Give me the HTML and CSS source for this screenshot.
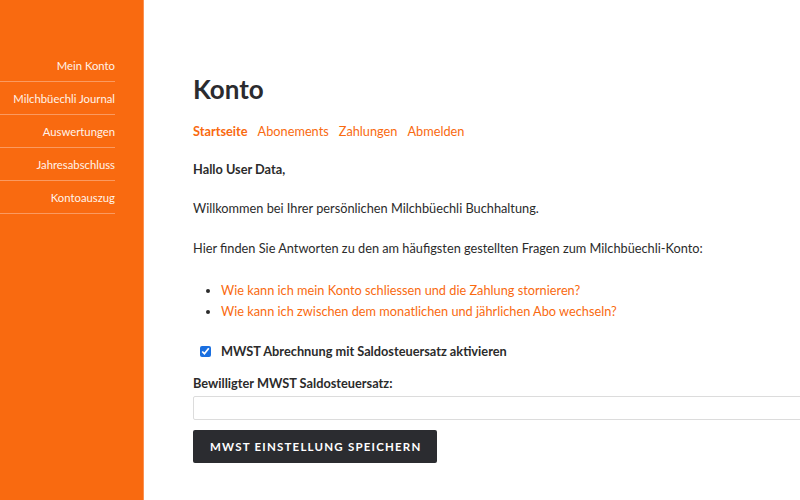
FILE: index.html
```html
<!DOCTYPE html>
<html lang="de">
<head>
    <meta charset="UTF-8">
    <title>Konto</title>
    <link rel="stylesheet" href="styles.css">
</head>
<body>
    <div class="layout">
        <aside class="sidebar">
            <ul class="side-menu">
                <li><a href="#">Mein Konto</a></li>
                <li><a href="#">Milchbüechli Journal</a></li>
                <li><a href="#">Auswertungen</a></li>
                <li><a href="#">Jahresabschluss</a></li>
                <li><a href="#">Kontoauszug</a></li>
            </ul>
        </aside>

        <main class="content">
            <h1>Konto</h1>
            <nav class="tabs">
                <a href="#" class="active">Startseite</a>
                <a href="#">Abonements</a>
                <a href="#">Zahlungen</a>
                <a href="#">Abmelden</a>
            </nav>

            <p class="greeting">Hallo User Data,</p>
            <p class="welcome">Willkommen bei Ihrer persönlichen Milchbüechli Buchhaltung.</p>
            <p>Hier finden Sie Antworten zu den am häufigsten gestellten Fragen zum Milchbüechli-Konto:</p>

            <ul class="faq">
                <li><a href="#">Wie kann ich mein Konto schliessen und die Zahlung stornieren?</a></li>
                <li><a href="#">Wie kann ich zwischen dem monatlichen und jährlichen Abo wechseln?</a></li>
            </ul>

            <form class="mwst-form">
                <label class="check">
                    <input type="checkbox" checked>
                    MWST Abrechnung mit Saldosteuersatz aktivieren
                </label>
                <label for="rate" class="field-label">Bewilligter MWST Saldosteuersatz:</label>
                <input type="text" id="rate" class="text-input">
                <button type="button" class="btn">MWST Einstellung speichern</button>
            </form>
        </main>
    </div>
</body>
</html>
```

FILE: styles.css
```css
body {
    margin: 0;
    font-family: Lato, "Open Sans", sans-serif;
    font-size: 12.75px;
    color: #2b2b2b;
    background: #fff;
}

.layout {
    display: flex;
    min-height: 500px;
}

/* Sidebar */
.sidebar {
    width: 143px;
    flex-shrink: 0;
    background-color: #f96a10;
    border-right: 1px solid #fb9152;
}

.side-menu {
    list-style: none;
    margin: 49px 0 0 0;
    padding: 0;
    width: 115px;
}

.side-menu li {
    border-bottom: 1px solid #fb9a60;
}

.side-menu a {
    display: block;
    text-align: right;
    color: #fff3ea;
    text-decoration: none;
    font-size: 11.3px;
    line-height: 16px;
    padding: 9px 0 7px 0;
}

/* Main content */
.content {
    flex: 1;
    padding: 0 0 0 49px;
    min-width: 0;
}

h1 {
    font-size: 26px;
    font-weight: 700;
    color: #2b2b2f;
    margin: 73px 0 0 0;
    line-height: 32px;
}

.tabs {
    display: flex;
    gap: 10px;
    margin: 16px 0 18px 0;
    line-height: 20px;
}

.tabs a {
    color: #f96a10;
    text-decoration: none;
}

.tabs a.active {
    font-weight: 700;
}

p {
    margin: 0 0 19px 0;
    line-height: 20px;
}

.greeting {
    font-weight: 700;
}

.welcome {
    margin-bottom: 20px;
}

.faq {
    margin: 22px 0 19px 0;
    padding-left: 28px;
    line-height: 21px;
}

.faq a {
    color: #f96a10;
    text-decoration: none;
}

.mwst-form {
    display: flex;
    flex-direction: column;
    align-items: flex-start;
}

.check {
    display: flex;
    align-items: center;
    gap: 10px;
    font-weight: 700;
    line-height: 20px;
    margin: 0 0 12px 7px;
}

.check input {
    margin: 0;
    width: 11px;
    height: 11px;
    accent-color: #1a6fe0;
}

.field-label {
    font-weight: 700;
    line-height: 20px;
    margin-bottom: 3px;
}

.text-input {
    width: 620px;
    height: 24px;
    box-sizing: border-box;
    border: 1px solid #dcdcdc;
    border-radius: 2px;
    margin: 0 0 10px 0;
    font: inherit;
}

.btn {
    background-color: #2b2c30;
    color: #fff;
    border: none;
    border-radius: 2px;
    font-family: Lato, sans-serif;
    font-size: 11.5px;
    font-weight: 700;
    text-transform: uppercase;
    letter-spacing: 1.2px;
    padding: 0 16px 0 17px;
    height: 33px;
    cursor: pointer;
}
```
